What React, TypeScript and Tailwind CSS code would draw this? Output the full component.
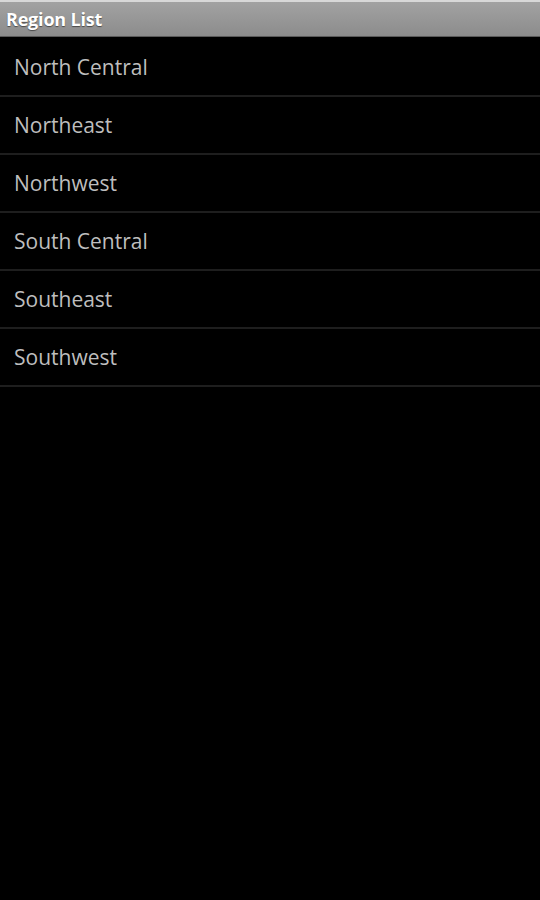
const regions = [
  "North Central",
  "Northeast",
  "Northwest",
  "South Central",
  "Southeast",
  "Southwest",
];

export default function App() {
  return (
    <div
      className="min-h-[900px] w-full bg-black"
      style={{ fontFamily: '"Open Sans", "Noto Sans", sans-serif' }}
    >
      {/* Title bar */}
      <div className="h-[37px] border-t-[2px] border-[#d8d8d8] border-b border-b-[#5a5a5a] bg-gradient-to-b from-[#a2a2a2] to-[#8c8c8c] flex items-center px-[6px]">
        <span className="text-[18px] font-bold text-white leading-none tracking-[-0.2px] [text-shadow:0_1px_1px_rgba(0,0,0,0.5)]">
          Region List
        </span>
      </div>

      {/* Region list */}
      <ul className="pt-[2px]">
        {regions.map((name) => (
          <li
            key={name}
            className="h-[58px] flex items-center px-[14px] pt-[2px] border-b-2 border-[#1e1e1e] text-[21px] text-[#bebebe]"
          >
            {name}
          </li>
        ))}
      </ul>
    </div>
  );
}
